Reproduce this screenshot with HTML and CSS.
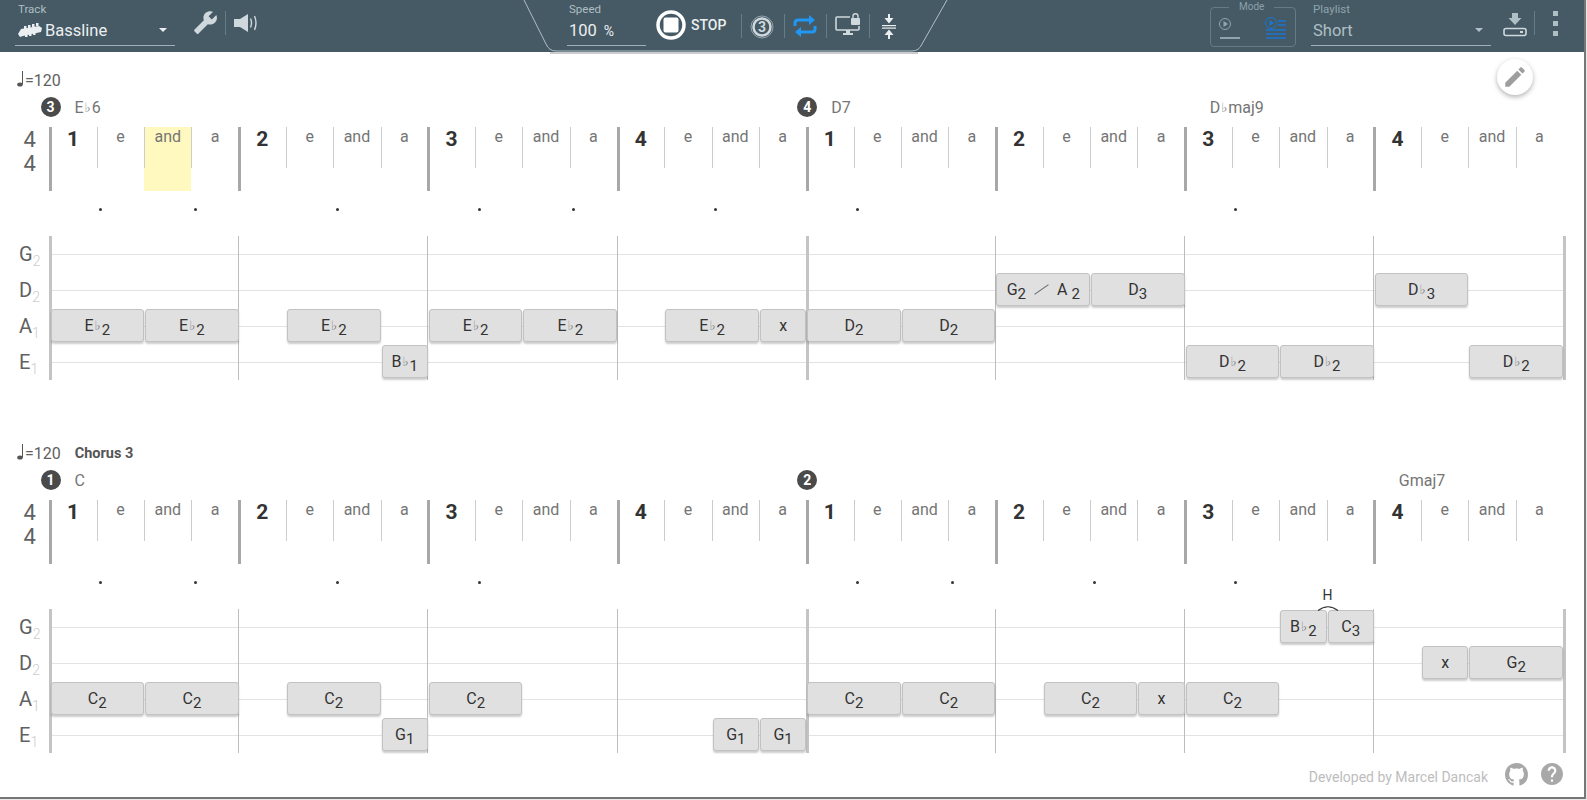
FILE: index.html
```html
<!DOCTYPE html>
<html>
<head>
  <title>Bassline</title>
  <link rel="stylesheet" href="styles.css">
</head>
<body>
<div class="app">
  <header class="toolbar">
    <div class="field track-field">
      <label>Track</label>
      <div class="value">
        <svg class="bass-icon" viewBox="0 0 24 14" width="24" height="14">
          <g fill="#eceff1">
            <path d="M0 11 L3 6 L21 3 L24 5 L23 9 L5 13 L2 14 Z"/>
            <rect x="6" y="3" width="2.500" height="4"/><rect x="10" y="2" width="2.500" height="4"/><rect x="14" y="1" width="2.500" height="3"/><rect x="18" y="0" width="2.500" height="3"/>
            <rect x="7" y="11" width="2.500" height="3"/><rect x="11" y="10" width="2.500" height="3"/><rect x="15" y="9" width="2.500" height="3"/>
          </g>
        </svg>
        <span class="value-text">Bassline</span>
        <i class="caret"></i>
      </div>
    </div>
    <svg class="wrench" viewBox="0 0 24 24" width="25" height="25"><path fill="#cfd8dc" transform="matrix(-1 0 0 1 24 0)" d="M22.7 19l-9.1-9.1c.9-2.3.4-5-1.5-6.9-2-2-5-2.4-7.4-1.3L9 6 6 9 1.6 4.7C.4 7.1.9 10.1 2.9 12.1c1.9 1.9 4.6 2.4 6.9 1.5l9.1 9.1c.4.4 1 .4 1.4 0l2.3-2.3c.5-.4.5-1.1.1-1.4z"/></svg>
    <span class="sep sep-track"></span>
    <svg class="speaker" viewBox="0 0 24 18" width="24" height="18">
      <path fill="#cfd8dc" d="M0 5h6l8-5v18l-8-5H0z"/>
      <path fill="none" stroke="#cfd8dc" stroke-width="1.400" d="M16.500 4.500q2 4.500 0 9M20.500 2q3 7 0 14"/>
    </svg>

    <div class="field speed-field">
      <label>Speed</label>
      <div class="value"><span class="value-text">100</span><span class="percent">%</span></div>
    </div>
    <svg class="stop-icon" viewBox="0 0 30 30" width="30" height="30">
      <circle cx="15" cy="15" r="13" fill="none" stroke="#fff" stroke-width="3.500"/>
      <rect x="7.500" y="7.500" width="15" height="15" rx="2" fill="#fff"/>
    </svg>
    <span class="stop-text">STOP</span>
    <span class="sep sep-stop"></span>
    <svg class="count-icon" viewBox="0 0 24 24" width="24" height="24">
      <circle cx="12" cy="12" r="11" fill="none" stroke="#90a4ae" stroke-width="1"/>
      <circle cx="12" cy="12" r="8.500" fill="none" stroke="#cfd8dc" stroke-width="2.500"/>
      <text x="12" y="17" text-anchor="middle" font-family="Roboto" font-weight="700" font-size="14" fill="#cfd8dc">3</text>
    </svg>
    <span class="sep sep-count"></span>
    <svg class="repeat-icon" viewBox="0 0 24 22" width="24" height="22">
      <path fill="none" stroke="#2196f3" stroke-width="3" d="M2 11V8q0-3 3-3h14M22 11v3q0 3-3 3H5"/>
      <path fill="#2196f3" d="M16 0l6 5-6 5zM8 12l-6 5 6 5z"/>
    </svg>
    <span class="sep sep-repeat"></span>
    <svg class="screen-icon" viewBox="0 0 26 24" width="26" height="24">
      <path fill="none" stroke="#cfd8dc" stroke-width="1.600" d="M15 4H2q-1 0-1 1v11q0 1 1 1h21q1 0 1-1v-3"/>
      <path fill="#cfd8dc" d="M11 17h4v3h3v2H8v-2h3z"/>
      <rect x="16" y="5" width="9" height="7" rx="1" fill="#cfd8dc"/>
      <path fill="none" stroke="#cfd8dc" stroke-width="1.400" d="M18 5V3q0-2.300 2.500-2.300T23 3v2"/>
    </svg>
    <span class="sep sep-screen"></span>
    <svg class="compress-icon" viewBox="0 0 14 25" width="14" height="25">
      <g fill="#eceff1">
        <path d="M6 0h2v4h3.500L7 9.500 2.500 4H6zM7 15.500l4.500 5.500H8v4H6v-4H2.500z"/>
        <rect x="0" y="11" width="14" height="1.200"/><rect x="0" y="13.500" width="14" height="1.200"/>
      </g>
    </svg>

    <fieldset class="mode">
      <legend>Mode</legend>
      <svg viewBox="0 0 22 24" width="22" height="24">
        <g fill="none" stroke="#90a4ae" stroke-width="1"><circle cx="6" cy="7" r="5.500"/></g>
        <path fill="#90a4ae" d="M4.500 4l4.500 3-4.500 3z"/>
        <rect x="1" y="20" width="20" height="2" fill="#90a4ae"/>
      </svg>
      <svg viewBox="0 0 22 24" width="22" height="24">
        <circle cx="6" cy="6" r="5.500" fill="none" stroke="#1976d2"/>
        <path fill="#1976d2" d="M4.500 3l4.500 3-4.500 3z"/>
        <path stroke="#1976d2" stroke-width="1.500" d="M13 4h8M13 8h8M1 13h20M1 17h20M1 21h20"/>
      </svg>
    </fieldset>
    <div class="field playlist-field">
      <label>Playlist</label>
      <div class="value"><span class="value-text">Short</span><i class="caret"></i></div>
    </div>
    <svg class="download-icon" viewBox="0 0 24 24" width="24" height="24">
      <path fill="#b0bec5" d="M9 0h6v5h3.500L12 12 5.500 5H9z"/>
      <rect x="1" y="15.500" width="22" height="7" rx="2" fill="none" stroke="#cfd8dc" stroke-width="1.600"/>
      <rect x="17" y="18" width="3" height="2" fill="#cfd8dc"/>
    </svg>
    <span class="sep sep-download"></span>
    <div class="more"><i></i><i></i><i></i></div>

    <svg class="panel-edge" viewBox="0 0 440 56" width="440" height="56">
      <path fill="none" stroke="#b0bec5" d="M4 0L26 44Q29 51 36 51H392Q399 51 402 44L427 0"/>
      <path stroke="#cccccc" stroke-width="2" d="M30 53H398"/>
    </svg>
  </header>

  <button class="edit-btn"><svg viewBox="0 0 24 24" width="26" height="26"><path fill="#9e9e9e" d="M3 17.250V21h3.750L17.810 9.940l-3.750-3.750L3 17.250zM20.710 7.040c.39-.39.39-1.020 0-1.410l-2.340-2.340c-.39-.39-1.020-.39-1.410 0l-1.830 1.830 3.750 3.750 1.830-1.830z"/></svg></button>

  <section class="system">
    <div class="tempo-row">
      <svg class="quarter" viewBox="0 0 8 16" width="8" height="16"><ellipse cx="3" cy="13.500" rx="2.800" ry="2" fill="#555"/><rect x="5" y="0" width="1" height="13" fill="#555"/></svg>
      <span class="tempo">=120</span>
    </div>
    <div class="grid chords">
      <div class="chord at-0"><b class="badge">3</b>E<span class="flat">♭</span>6</div>
      <div class="chord at-16"><b class="badge">4</b>D7</div>
      <div class="chord plain at-24">D<span class="flat">♭</span>maj9</div>
    </div>
    <div class="staff">
      <div class="timesig"><span>4</span><span>4</span></div>
      <div class="grid beats">
        <div class="beat bar">1</div><div class="beat">e</div><div class="beat now">and</div><div class="beat">a</div>
        <div class="beat bar">2</div><div class="beat">e</div><div class="beat">and</div><div class="beat">a</div>
        <div class="beat bar">3</div><div class="beat">e</div><div class="beat">and</div><div class="beat">a</div>
        <div class="beat bar">4</div><div class="beat">e</div><div class="beat">and</div><div class="beat">a</div>
        <div class="beat bar">1</div><div class="beat">e</div><div class="beat">and</div><div class="beat">a</div>
        <div class="beat bar">2</div><div class="beat">e</div><div class="beat">and</div><div class="beat">a</div>
        <div class="beat bar">3</div><div class="beat">e</div><div class="beat">and</div><div class="beat">a</div>
        <div class="beat bar">4</div><div class="beat">e</div><div class="beat">and</div><div class="beat">a</div>
      </div>
    </div>
    <div class="grid dots">
      <i class="at-0 w2"></i><i class="at-2 w2"></i><i class="at-5 w2"></i><i class="at-8 w2"></i><i class="at-10 w2"></i><i class="at-13 w2"></i><i class="at-16 w2"></i><i class="at-24 w2"></i>
    </div>
    <div class="staff">
      <div class="strings">
        <div>G<sub>2</sub></div><div>D<sub>2</sub></div><div>A<sub>1</sub></div><div>E<sub>1</sub></div>
      </div>
      <div class="grid tab">
        <div class="note str-a at-0 w2">E<span class="flat">♭</span><sub>2</sub></div>
        <div class="note str-a at-2 w2">E<span class="flat">♭</span><sub>2</sub></div>
        <div class="note str-a at-5 w2">E<span class="flat">♭</span><sub>2</sub></div>
        <div class="note str-e at-7 w1">B<span class="flat">♭</span><sub>1</sub></div>
        <div class="note str-a at-8 w2">E<span class="flat">♭</span><sub>2</sub></div>
        <div class="note str-a at-10 w2">E<span class="flat">♭</span><sub>2</sub></div>
        <div class="note str-a at-13 w2">E<span class="flat">♭</span><sub>2</sub></div>
        <div class="note str-a at-15 w1">x</div>
        <div class="note str-a at-16 w2">D<sub>2</sub></div>
        <div class="note str-a at-18 w2">D<sub>2</sub></div>
        <div class="note str-d at-20 w2">G<sub>2</sub><i class="slide"></i>A&nbsp;<sub>2</sub></div>
        <div class="note str-d at-22 w2">D<sub>3</sub></div>
        <div class="note str-e at-24 w2">D<span class="flat">♭</span><sub>2</sub></div>
        <div class="note str-e at-26 w2">D<span class="flat">♭</span><sub>2</sub></div>
        <div class="note str-d at-28 w2">D<span class="flat">♭</span><sub>3</sub></div>
        <div class="note str-e at-30 w2">D<span class="flat">♭</span><sub>2</sub></div>
      </div>
    </div>
  </section>

  <section class="system last">
    <div class="tempo-row">
      <svg class="quarter" viewBox="0 0 8 16" width="8" height="16"><ellipse cx="3" cy="13.500" rx="2.800" ry="2" fill="#555"/><rect x="5" y="0" width="1" height="13" fill="#555"/></svg>
      <span class="tempo">=120</span>
      <span class="part-name">Chorus 3</span>
    </div>
    <div class="grid chords">
      <div class="chord at-0"><b class="badge">1</b>C</div>
      <div class="chord at-16"><b class="badge">2</b></div>
      <div class="chord plain at-28">Gmaj7</div>
    </div>
    <div class="staff">
      <div class="timesig"><span>4</span><span>4</span></div>
      <div class="grid beats">
        <div class="beat bar">1</div><div class="beat">e</div><div class="beat">and</div><div class="beat">a</div>
        <div class="beat bar">2</div><div class="beat">e</div><div class="beat">and</div><div class="beat">a</div>
        <div class="beat bar">3</div><div class="beat">e</div><div class="beat">and</div><div class="beat">a</div>
        <div class="beat bar">4</div><div class="beat">e</div><div class="beat">and</div><div class="beat">a</div>
        <div class="beat bar">1</div><div class="beat">e</div><div class="beat">and</div><div class="beat">a</div>
        <div class="beat bar">2</div><div class="beat">e</div><div class="beat">and</div><div class="beat">a</div>
        <div class="beat bar">3</div><div class="beat">e</div><div class="beat">and</div><div class="beat">a</div>
        <div class="beat bar">4</div><div class="beat">e</div><div class="beat">and</div><div class="beat">a</div>
      </div>
    </div>
    <div class="grid dots">
      <i class="at-0 w2"></i><i class="at-2 w2"></i><i class="at-5 w2"></i><i class="at-8 w2"></i><i class="at-16 w2"></i><i class="at-18 w2"></i><i class="at-21 w2"></i><i class="at-24 w2"></i>
    </div>
    <div class="staff">
      <div class="strings">
        <div>G<sub>2</sub></div><div>D<sub>2</sub></div><div>A<sub>1</sub></div><div>E<sub>1</sub></div>
      </div>
      <div class="grid tab">
        <div class="note str-a at-0 w2">C<sub>2</sub></div>
        <div class="note str-a at-2 w2">C<sub>2</sub></div>
        <div class="note str-a at-5 w2">C<sub>2</sub></div>
        <div class="note str-e at-7 w1">G<sub>1</sub></div>
        <div class="note str-a at-8 w2">C<sub>2</sub></div>
        <div class="note str-e at-14 w1">G<sub>1</sub></div>
        <div class="note str-e at-15 w1">G<sub>1</sub></div>
        <div class="note str-a at-16 w2">C<sub>2</sub></div>
        <div class="note str-a at-18 w2">C<sub>2</sub></div>
        <div class="note str-a at-21 w2">C<sub>2</sub></div>
        <div class="note str-a at-23 w1">x</div>
        <div class="note str-a at-24 w2">C<sub>2</sub></div>
        <div class="note str-g at-26 w1">B<span class="flat">♭</span><sub>2</sub></div>
        <div class="note str-g at-27 w1">C<sub>3</sub>
          <div class="hammer">H<svg viewBox="0 0 22 6" width="22" height="6"><path fill="none" stroke="#333" stroke-width="1.200" d="M1 5.500Q11-2 21 5.500"/></svg></div>
        </div>
        <div class="note str-d at-29 w1">x</div>
        <div class="note str-d at-30 w2">G<sub>2</sub></div>
      </div>
    </div>
  </section>

  <footer class="credits">
    <span class="credit-text">Developed by Marcel Dancak</span>
    <svg viewBox="0 0 16 16" width="23" height="23"><path fill="#a8a8a8" d="M8 0C3.580 0 0 3.580 0 8c0 3.540 2.290 6.530 5.470 7.590.4.070.55-.17.55-.38 0-.19-.01-.82-.01-1.490-2.010.37-2.530-.49-2.690-.94-.09-.23-.48-.94-.82-1.130-.28-.15-.68-.52-.01-.53.63-.01 1.080.58 1.230.82.720 1.210 1.870.87 2.330.66.070-.52.280-.87.510-1.070-1.780-.2-3.640-.89-3.640-3.950 0-.87.310-1.590.820-2.150-.08-.2-.36-1.020.08-2.120 0 0 .67-.21 2.200.82.640-.18 1.320-.27 2-.27.680 0 1.360.090 2 .27 1.530-1.040 2.200-.82 2.200-.82.440 1.100.160 1.920.080 2.120.510.560.820 1.270.820 2.150 0 3.070-1.870 3.750-3.650 3.950.290.250.540.730.540 1.480 0 1.070-.01 1.930-.01 2.200 0 .21.150.46.550.38A8.013 8.013 0 0016 8c0-4.420-3.580-8-8-8z"/></svg>
    <svg viewBox="2 2 20 20" width="22" height="22"><path fill="#a8a8a8" d="M12 2C6.480 2 2 6.480 2 12s4.480 10 10 10 10-4.480 10-10S17.520 2 12 2zm1 17h-2v-2h2v2zm2.070-7.750l-.9.920C13.450 12.900 13 13.500 13 15h-2v-.5c0-1.100.45-2.100 1.170-2.830l1.240-1.260c.37-.36.59-.86.59-1.410 0-1.100-.9-2-2-2s-2 .9-2 2H8c0-2.210 1.790-4 4-4s4 1.790 4 4c0 .88-.36 1.680-.93 2.250z"/></svg>
  </footer>
</div>
</body>
</html>
```

FILE: styles.css
```css
html, body {
  margin: 0;
  height: 100%;
  background: #e8e8e8;
}

body {
  font-family: Roboto, sans-serif;
  overflow: hidden;
}

.app {
  position: relative;
  box-sizing: border-box;
  width: 1586px;
  height: 799px;
  background: #fff;
  border-right: 2px solid #777;
  border-bottom: 2px solid #777;
}

/* top bar */
.toolbar {
  position: relative;
  display: flex;
  align-items: center;
  box-sizing: border-box;
  height: 52px;
  padding-left: 15px;
  background: #455a64;
}

.field {
  box-sizing: border-box;
  align-self: flex-start;
  height: 46px;
  padding-top: 3px;
  border-bottom: 1px solid #9fb0b8;
}

.field label {
  display: block;
  height: 12px;
  padding-left: 3px;
  margin-bottom: 3px;
  font-size: 11.500px;
  line-height: 12px;
  color: #b0bec5;
}

.field .value {
  display: flex;
  align-items: center;
  height: 24px;
  padding-left: 3px;
  font-size: 16.500px;
  color: #eceff1;
}

.track-field { width: 160px; }
.speed-field { width: 79px; margin-left: 309px; }
.speed-field label, .speed-field .value { padding-left: 2px; }
.playlist-field { width: 180px; margin-left: 15px; }
.playlist-field label { color: #90a4ae; padding-left: 2px; }
.playlist-field .value { color: #b0bec5; padding-left: 2px; }

.bass-icon { margin-right: 3px; }

.caret {
  width: 0;
  height: 0;
  margin-left: auto;
  margin-right: 8px;
  border-left: 4px solid transparent;
  border-right: 4px solid transparent;
  border-top: 4px solid #eceff1;
}

.playlist-field .caret { border-top-color: #b0bec5; }

.percent {
  margin-left: 7px;
  font-size: 14px;
  padding-top: 2px;
}

.sep {
  width: 1px;
  height: 24px;
  background: #667c86;
}

.wrench { margin-left: 18px; margin-top: -8px; }
.sep-track { margin-left: 7px; margin-top: -7px; }
.speaker { margin-left: 8px; margin-top: -7px; }

.stop-icon { margin-left: 10px; margin-top: -3px; }

.stop-text {
  margin-left: 5px;
  margin-top: -3px;
  font-size: 14px;
  font-weight: 500;
  color: #eceff1;
}

.sep-stop { margin-left: 15px; }
.count-icon { margin-left: 8px; margin-top: 2px; }
.sep-count { margin-left: 10px; }
.repeat-icon { margin-left: 8px; }
.sep-repeat { margin-left: 9px; }
.screen-icon { margin-left: 8px; margin-top: -2px; }
.sep-screen { margin-left: 8px; }
.compress-icon { margin-left: 12px; margin-top: 1px; }

.mode {
  display: flex;
  justify-content: space-between;
  box-sizing: border-box;
  align-self: flex-start;
  width: 86px;
  height: 47px;
  margin: 0 0 0 auto;
  padding: 3px 8px 0 8px;
  border: 1px solid #647a84;
  border-radius: 4px;
  min-inline-size: 0;
}

.mode legend {
  padding: 0 10px;
  margin-left: 10px;
  font-size: 10px;
  line-height: 14px;
  color: #8ca0aa;
}

.download-icon { margin-left: 12px; margin-top: -2px; }
.sep-download { margin-left: 7px; margin-top: -6px; }

.more {
  display: flex;
  flex-direction: column;
  gap: 5px;
  margin: -6px 26px 0 18px;
}

.more i {
  display: block;
  width: 5px;
  height: 5px;
  background: #b0bec5;
}

.panel-edge {
  position: absolute;
  left: 520px;
  top: 0;
}

.edit-btn {
  position: absolute;
  left: 1497px;
  top: 59px;
  display: flex;
  align-items: center;
  justify-content: center;
  width: 36px;
  height: 36px;
  padding: 0;
  border: none;
  border-radius: 50%;
  background: #fff;
  box-shadow: 0 2px 5px rgba(0, 0, 0, 0.3);
}

/* score */
.system {
  box-sizing: border-box;
  height: 373px;
  padding-top: 18px;
}

.system.last { height: auto; }

.grid {
  display: grid;
  grid-template-columns: repeat(32, 47.300px);
}

.tempo-row {
  display: flex;
  align-items: center;
  height: 20px;
  padding-left: 17px;
  color: #5f5f5f;
}

.quarter { margin-top: -2px; }

.tempo { font-size: 16px; }

.part-name {
  margin-left: 14px;
  font-size: 14.500px;
  font-weight: 700;
  color: #555;
}

.chords {
  height: 20px;
  margin: 7px 0 10px 49.500px;
}

.chord {
  display: flex;
  align-items: center;
  grid-row: 1;
  white-space: nowrap;
  font-size: 16px;
  color: #757575;
}

.chord.plain { padding-left: 25px; }

.badge {
  flex: none;
  width: 20px;
  height: 20px;
  margin: 0 14px 0 -9px;
  border-radius: 50%;
  background: #4a4a4a;
  color: #fff;
  font-size: 14px;
  line-height: 20px;
  text-align: center;
}

.flat {
  margin: 0 1px;
  font-size: 13px;
  color: #777;
  font-family: "DejaVu Sans", sans-serif;
}

.staff { display: flex; }

.timesig {
  display: flex;
  flex-direction: column;
  align-items: center;
  box-sizing: border-box;
  width: 49.500px;
  padding-top: 1px;
  font-size: 22px;
  line-height: 24px;
  color: #616161;
}

.timesig span { margin-left: 10px; }

.beat {
  position: relative;
  height: 64px;
  background: linear-gradient(#ccc, #ccc) left top / 1px 41px no-repeat;
  font-size: 16px;
  line-height: 20px;
  text-align: center;
  color: #757575;
}

.beat.bar {
  background: none;
  font-size: 21px;
  font-weight: 700;
  line-height: 25px;
  color: #333;
}

.beat.bar::before {
  content: "";
  position: absolute;
  left: -0.500px;
  top: 0;
  bottom: 0;
  width: 3px;
  background: #a8a8a8;
}

.beat.now { background-color: #fff9c0; }

.dots {
  align-items: center;
  height: 18px;
  margin: 9px 0 18px 49.500px;
}

.dots i {
  justify-self: center;
  width: 3px;
  height: 3px;
  margin-left: 8px;
  border-radius: 50%;
  background: #333;
}

.strings {
  box-sizing: border-box;
  width: 49.500px;
  padding-left: 19px;
  font-size: 20px;
  line-height: 36px;
  color: #616161;
}

.strings div { height: 36px; }

.strings sub {
  font-size: 14px;
  font-weight: 300;
  line-height: 0;
  color: #ccc;
}

.tab {
  position: relative;
  grid-template-rows: repeat(4, 36px);
  width: 1513.600px;
  background:
    linear-gradient(#c4c4c4, #c4c4c4) calc(50% + 1.500px) 0 / 3px 100% no-repeat,
    repeating-linear-gradient(to right, transparent 0 188.200px, #bdbdbd 188.200px 189.200px),
    repeating-linear-gradient(to bottom, transparent 0 18px, #e3e3e3 18px 19px, transparent 19px 36px);
}

.tab::before,
.tab::after {
  content: "";
  position: absolute;
  top: 0;
  bottom: 0;
  width: 3px;
  background: #c4c4c4;
}

.tab::before { left: -0.500px; }
.tab::after { right: -3px; }

.note {
  position: relative;
  z-index: 1;
  display: flex;
  align-items: center;
  justify-content: center;
  box-sizing: border-box;
  height: 33px;
  margin: 1px 0 2px 1px;
  border: 1px solid #c2c2c2;
  border-radius: 3px;
  background: #e0e0e0;
  box-shadow: 0 2px 2px rgba(0, 0, 0, 0.2);
  font-size: 16px;
  color: #333;
}

.note sub {
  font-size: 15px;
  line-height: 0;
  margin-top: 8px;
}

.slide {
  width: 17px;
  height: 1px;
  margin: 0 7px;
  background: #666;
  transform: rotate(-35deg);
}

.hammer {
  position: absolute;
  left: -12px;
  bottom: 31px;
  display: flex;
  flex-direction: column;
  align-items: center;
  gap: 2px;
  width: 22px;
  font-size: 14px;
  line-height: 16px;
}

.str-g { grid-row: 1; }
.str-d { grid-row: 2; }
.str-a { grid-row: 3; }
.str-e { grid-row: 4; }

.w1 { grid-column-end: span 1; }
.w2 { grid-column-end: span 2; }

.at-0 { grid-column-start: 1; }
.at-2 { grid-column-start: 3; }
.at-5 { grid-column-start: 6; }
.at-7 { grid-column-start: 8; }
.at-8 { grid-column-start: 9; }
.at-10 { grid-column-start: 11; }
.at-13 { grid-column-start: 14; }
.at-14 { grid-column-start: 15; }
.at-15 { grid-column-start: 16; }
.at-16 { grid-column-start: 17; }
.at-18 { grid-column-start: 19; }
.at-20 { grid-column-start: 21; }
.at-21 { grid-column-start: 22; }
.at-22 { grid-column-start: 23; }
.at-23 { grid-column-start: 24; }
.at-24 { grid-column-start: 25; }
.at-26 { grid-column-start: 27; }
.at-27 { grid-column-start: 28; }
.at-28 { grid-column-start: 29; }
.at-29 { grid-column-start: 30; }
.at-30 { grid-column-start: 31; }

.chord.at-0, .chord.at-16, .chord.at-24, .chord.at-28 { grid-column-end: span 4; }

.credits {
  display: flex;
  align-items: center;
  justify-content: flex-end;
  gap: 17px;
  height: 22px;
  margin-top: 10px;
  padding-right: 21px;
  font-size: 14px;
  color: #bdbdbd;
}

.credit-text { padding-top: 5px; }

.credits svg:last-child { margin-left: -4px; }
```
